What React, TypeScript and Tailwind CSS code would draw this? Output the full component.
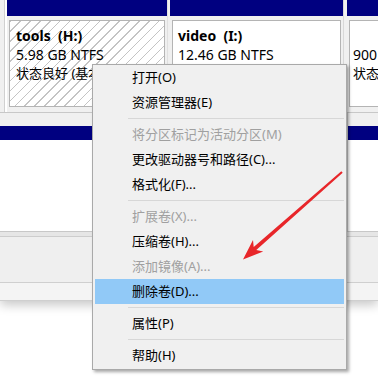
import React from 'react';

type Item = { label: string; disabled?: boolean; active?: boolean } | 'sep';

const menuItems: Item[] = [
  { label: '打开(O)' },
  { label: '资源管理器(E)' },
  'sep',
  { label: '将分区标记为活动分区(M)', disabled: true },
  { label: '更改驱动器号和路径(C)...' },
  { label: '格式化(F)...' },
  'sep',
  { label: '扩展卷(X)...', disabled: true },
  { label: '压缩卷(H)...' },
  { label: '添加镜像(A)...', disabled: true },
  { label: '删除卷(D)...', active: true },
  'sep',
  { label: '属性(P)' },
  'sep',
  { label: '帮助(H)' },
];

function ContextMenu() {
  return (
    <div className="absolute left-[92px] top-[64px] w-[255px] bg-[#f0f0f0] border border-[#a9a9a9] shadow-[2px_2px_3px_rgba(0,0,0,0.35)] px-[2px] pb-[1px]">
      {menuItems.map((it, i) =>
        it === 'sep' ? (
          <div key={i} className="h-[7px] flex items-center pl-[33px]">
            <div className="h-px w-full bg-[#d7d7d7]" />
          </div>
        ) : (
          <div
            key={i}
            className={`h-[25px] flex items-center pl-[37px] text-[13px] ${
              it.active ? 'bg-[#91c9f7]' : ''
            } ${it.disabled ? 'text-[#a0a0a0]' : 'text-black'}`}
          >
            {it.label}
          </div>
        )
      )}
    </div>
  );
}

function Arrow() {
  return (
    <svg className="absolute left-0 top-0" width="378" height="376" viewBox="0 0 378 376">
      <polygon
        fill="#e8262a"
        points="341.3,171.2 253.7,246.9 253,240 243,259.5 263.2,251.5 256.3,249.9 342.7,172.8"
      />
    </svg>
  );
}

export default function App() {
  return (
    <div className="relative w-[378px] h-[376px] overflow-hidden bg-white font-['Noto_Sans','Noto_Sans_CJK_SC',sans-serif] text-black">
      {/* 磁盘管理窗口背景 */}
      <div className="flex flex-col bg-[#f0f0f0] shadow-[0_4px_10px_rgba(0,0,0,0.22)]">
        {/* 第一行分区 */}
        <div className="flex h-[113px] border-b border-[#c8c8c8]">
          <div className="w-[5px] shrink-0 bg-[#f0f0f0] border-r border-[#d0d0d0]" />
          <div className="w-[2px] shrink-0 bg-white" />
          <div className="w-[160px] shrink-0 flex flex-col">
            <div className="h-[16px] bg-[#000080]" />
            <div className="flex-1 px-[2px] pt-[4px] pb-[5px]">
              <div className="h-full border border-[#b4b4b4] bg-[repeating-linear-gradient(135deg,#c4c4c4_0px,#c4c4c4_1px,#ffffff_1px,#ffffff_7px)] pl-[6px] pt-[5px] text-[14px] leading-[19px]">
                <div className="font-bold">tools&nbsp;&nbsp;(H:)</div>
                <div>5.98 GB NTFS</div>
                <div className="text-[13px]">状态良好 (基本</div>
              </div>
            </div>
          </div>
          <div className="w-[3px] shrink-0 bg-[#f0f0f0] border-l border-[#e0e0e0]" />
          <div className="w-[173px] shrink-0 flex flex-col">
            <div className="h-[16px] bg-[#000080]" />
            <div className="flex-1 px-[2px] pt-[4px] pb-[5px]">
              <div className="h-full border border-[#b4b4b4] bg-white pl-[5px] pt-[5px] text-[14px] leading-[19px]">
                <div className="font-bold">video&nbsp;&nbsp;(I:)</div>
                <div>12.46 GB NTFS</div>
              </div>
            </div>
          </div>
          <div className="w-[4px] shrink-0 bg-[#f0f0f0] border-l border-[#d8d8d8]" />
          <div className="flex-1 flex flex-col min-w-0">
            <div className="h-[16px] bg-[#000080]" />
            <div className="flex-1 pl-[2px] pt-[4px] pb-[5px]">
              <div className="h-full border border-r-0 border-[#b4b4b4] bg-white pl-[3px] pt-[24px] text-[14px] leading-[19px] whitespace-nowrap overflow-hidden">
                <div>900</div>
                <div className="text-[13px]">状态</div>
              </div>
            </div>
          </div>
        </div>

        {/* 第二行分区 */}
        <div className="flex h-[119px] border-b border-[#c8c8c8]">
          <div className="flex-1 flex flex-col">
            <div className="h-[13px] bg-[#f0f0f0]" />
            <div className="h-[14px] bg-[#000080]" />
            <div className="flex-1 bg-white" />
          </div>
          <div className="w-[3px] shrink-0 bg-[#e4e4e4] border-x border-[#cfcfcf]" />
          <div className="w-[30px] shrink-0 flex flex-col">
            <div className="h-[13px] bg-[#f0f0f0]" />
            <div className="h-[14px] bg-[#000080]" />
            <div className="flex-1 bg-white" />
          </div>
        </div>

        <div className="h-[5px] bg-[#e6e6e6] border-b border-[#cdcdcd]" />
        <div className="h-[46px] bg-[#efefef] border-b border-[#cfcfcf]" />
        <div className="h-[18px] bg-[#f4f4f4] border-b border-[#cfcfcf]" />
      </div>

      <ContextMenu />
      <Arrow />
    </div>
  );
}
